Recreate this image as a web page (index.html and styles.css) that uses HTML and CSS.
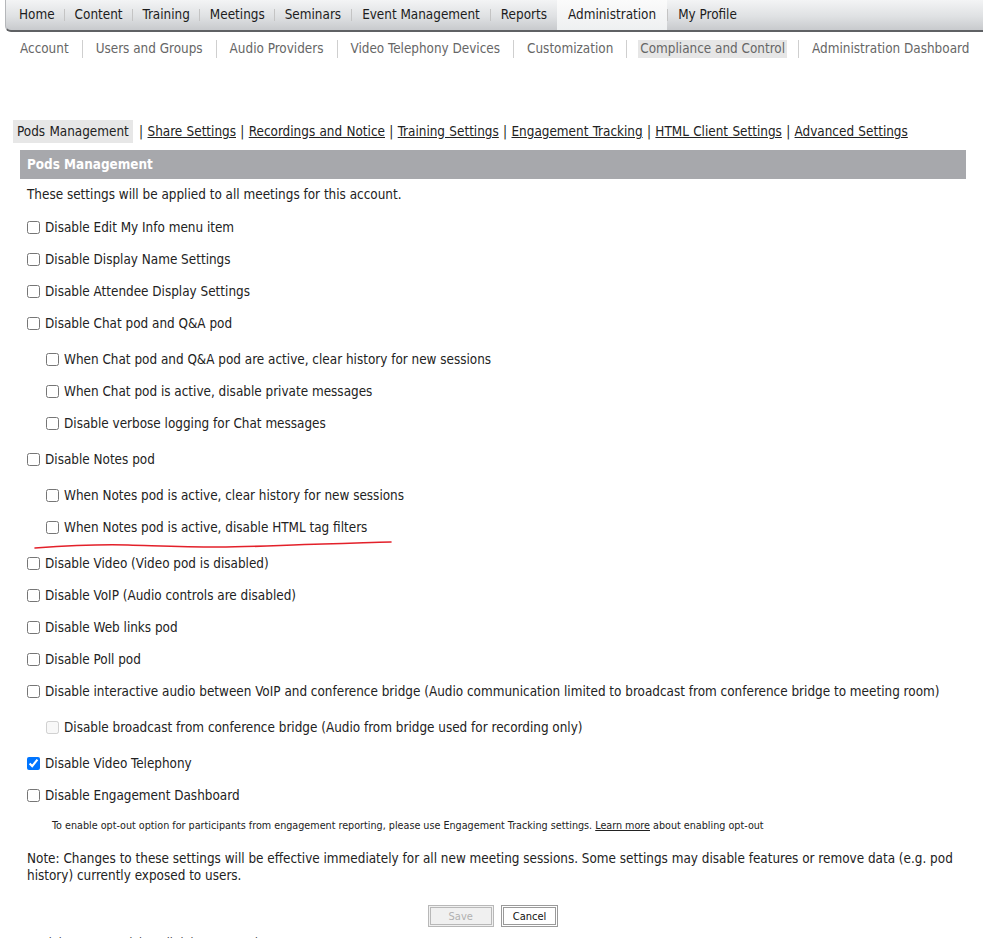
FILE: index.html
```html
<!DOCTYPE html>
<html lang="en">
<head>
    <meta charset="UTF-8">
    <title>Compliance and Control</title>
    <link rel="stylesheet" href="styles.css">
</head>
<body>
    <ul class="topnav">
        <li><a href="#">Home</a></li>
        <li><a href="#">Content</a></li>
        <li><a href="#">Training</a></li>
        <li><a href="#">Meetings</a></li>
        <li><a href="#">Seminars</a></li>
        <li><a href="#">Event Management</a></li>
        <li><a href="#">Reports</a></li>
        <li class="active"><a href="#">Administration</a></li>
        <li><a href="#">My Profile</a></li>
    </ul>

    <ul class="subnav">
        <li><a href="#">Account</a></li>
        <li><a href="#">Users and Groups</a></li>
        <li><a href="#">Audio Providers</a></li>
        <li><a href="#">Video Telephony Devices</a></li>
        <li><a href="#">Customization</a></li>
        <li class="active"><a href="#">Compliance and Control</a></li>
        <li><a href="#">Administration Dashboard</a></li>
    </ul>

    <div class="tabs">
        <span class="current">Pods Management</span>
        | <a href="#">Share Settings</a>
        | <a href="#">Recordings and Notice</a>
        | <a href="#">Training Settings</a>
        | <a href="#">Engagement Tracking</a>
        | <a href="#">HTML Client Settings</a>
        | <a href="#">Advanced Settings</a>
    </div>

    <div class="panel">
        <div class="panel_head">Pods Management</div>
        <div class="panel_body">
            <p class="intro">These settings will be applied to all meetings for this account.</p>

            <div class="options">
                <label class="row"><input type="checkbox"> Disable Edit My Info menu item</label>
                <label class="row"><input type="checkbox"> Disable Display Name Settings</label>
                <label class="row"><input type="checkbox"> Disable Attendee Display Settings</label>
                <label class="row"><input type="checkbox"> Disable Chat pod and Q&amp;A pod</label>
                <div class="sub">
                    <label class="row"><input type="checkbox"> When Chat pod and Q&amp;A pod are active, clear history for new sessions</label>
                    <label class="row"><input type="checkbox"> When Chat pod is active, disable private messages</label>
                    <label class="row"><input type="checkbox"> Disable verbose logging for Chat messages</label>
                </div>
                <label class="row"><input type="checkbox"> Disable Notes pod</label>
                <div class="sub">
                    <label class="row"><input type="checkbox"> When Notes pod is active, clear history for new sessions</label>
                    <label class="row"><input type="checkbox"> When Notes pod is active, disable HTML tag filters
                        <svg class="scribble" width="370" height="12" viewBox="0 0 370 12">
                            <path d="M2 8 C 30 6, 60 4, 95 5 S 150 7, 185 7 S 250 5, 290 4 S 340 2, 358 2" fill="none" stroke="#e3202a" stroke-width="1.6" stroke-linecap="round"/>
                        </svg>
                    </label>
                </div>
                <label class="row"><input type="checkbox"> Disable Video (Video pod is disabled)</label>
                <label class="row"><input type="checkbox"> Disable VoIP (Audio controls are disabled)</label>
                <label class="row"><input type="checkbox"> Disable Web links pod</label>
                <label class="row"><input type="checkbox"> Disable Poll pod</label>
                <label class="row"><input type="checkbox"> Disable interactive audio between VoIP and conference bridge (Audio communication limited to broadcast from conference bridge to meeting room)</label>
                <div class="sub">
                    <label class="row"><input type="checkbox" disabled> Disable broadcast from conference bridge (Audio from bridge used for recording only)</label>
                </div>
                <label class="row"><input type="checkbox" checked> Disable Video Telephony</label>
                <label class="row"><input type="checkbox"> Disable Engagement Dashboard</label>
            </div>

            <p class="optout">To enable opt-out option for participants from engagement reporting, please use Engagement Tracking settings. <a href="#">Learn more</a> about enabling opt-out</p>

            <p class="note">Note: Changes to these settings will be effective immediately for all new meeting sessions. Some settings may disable features or remove data (e.g. pod history) currently exposed to users.</p>

            <div class="buttons">
                <button class="save" disabled>Save</button>
                <button>Cancel</button>
            </div>
        </div>
    </div>

    <p class="copyright">Copyright &copy; 2020 Adobe. All rights reserved.</p>
</body>
</html>
```

FILE: styles.css
```css
*{
    padding: 0;
    margin: 0;
    box-sizing: border-box;
}
ul{
    list-style: none;
}
a{
    color: inherit;
    text-decoration: none;
}
body{
    font-family: "DejaVu Sans Condensed", "DejaVu Sans", sans-serif;
    font-size: 13.4px;
    color: #222;
    background: #fff;
}

/* top tabs */
.topnav{
    display: flex;
    height: 32px;
    margin-left: 5px;
    padding-left: 2px;
    border-left: 1px solid #b5b7ba;
    border-bottom: 2px solid #5f6164;
    border-bottom-left-radius: 6px;
    background: linear-gradient(#f3f4f5, #dfe1e3 55%, #c8cacd);
    white-space: nowrap;
}
.topnav li{
    flex-shrink: 0;
    padding: 0 9px 0 11px;
    line-height: 29px;
    color: #1c1c1c;
    background: linear-gradient(#c4c4c4, #c4c4c4) left center / 1px 12px no-repeat;
}
.topnav li:nth-child(n+5){
    padding: 0 10px 0 11px;
}
.topnav li:first-child{
    background: none;
}
.topnav li.active{
    padding: 0 11px 0 11px;
    background: linear-gradient(#fbfbfb, #eef0f1);
}

/* second row */
.subnav{
    display: flex;
    margin-top: 7px;
    margin-left: 7px;
    height: 20px;
    align-items: center;
    white-space: nowrap;
}
.subnav li{
    flex-shrink: 0;
    padding: 0 11px;
    border-left: 1px solid #cfcfcf;
    line-height: 18px;
}
.subnav li:first-child{
    border-left: none;
}
.subnav li a{
    display: block;
    padding: 0 2px;
    color: #666;
}
.subnav li.active a{
    background: #e6e6e6;
}

/* settings tabs */
.tabs{
    margin: 61px 0 0 13px;
    height: 23px;
    line-height: 23px;
    color: #222;
    white-space: nowrap;
    word-spacing: 0.5px;
}
.tabs .current{
    display: inline-block;
    padding: 0 4px;
    margin-right: 2px;
    background: #e7e7e7;
}
.tabs a{
    text-decoration: underline;
}

/* panel */
.panel{
    width: 946px;
    margin: 7px 0 0 20px;
}
.panel_head{
    height: 29px;
    line-height: 29px;
    padding-left: 7px;
    background: #a7a8ac;
    color: #fff;
    font-weight: bold;
}
.panel_body{
    padding-left: 7px;
}
.intro{
    margin-top: 8px;
    line-height: 16px;
}
.options{
    margin-top: 8px;
}
.row{
    display: flex;
    align-items: center;
    height: 32px;
    position: relative;
    white-space: nowrap;
}
.row input{
    width: 13px;
    height: 13px;
    margin: 0 5px 0 0;
}
.sub{
    padding: 4px 0 4px 19px;
}
.scribble{
    position: absolute;
    left: -13px;
    top: 29px;
}
.optout{
    margin: 7px 0 0 25px;
    font-size: 10.7px;
    line-height: 16px;
}
.optout a{
    text-decoration: underline;
}
.note{
    margin-top: 16px;
    line-height: 17px;
    padding-right: 8px;
}
.buttons{
    display: flex;
    justify-content: center;
    gap: 7px;
    margin-top: 21px;
    padding-right: 7px;
}
.buttons button{
    height: 22px;
    padding: 0 9px;
    font-family: "DejaVu Sans Condensed", sans-serif;
    font-size: 11px;
    color: #111;
    background: #fff;
    border: 3px double #9a9a9a;
}
.buttons .save{
    width: 66px;
    color: #b0b0b0;
    background: #f0f0f0;
    border-color: #b8b8b8;
}
.copyright{
    margin: 9px 0 0 17px;
    font-size: 12px;
    color: #444;
}
```
